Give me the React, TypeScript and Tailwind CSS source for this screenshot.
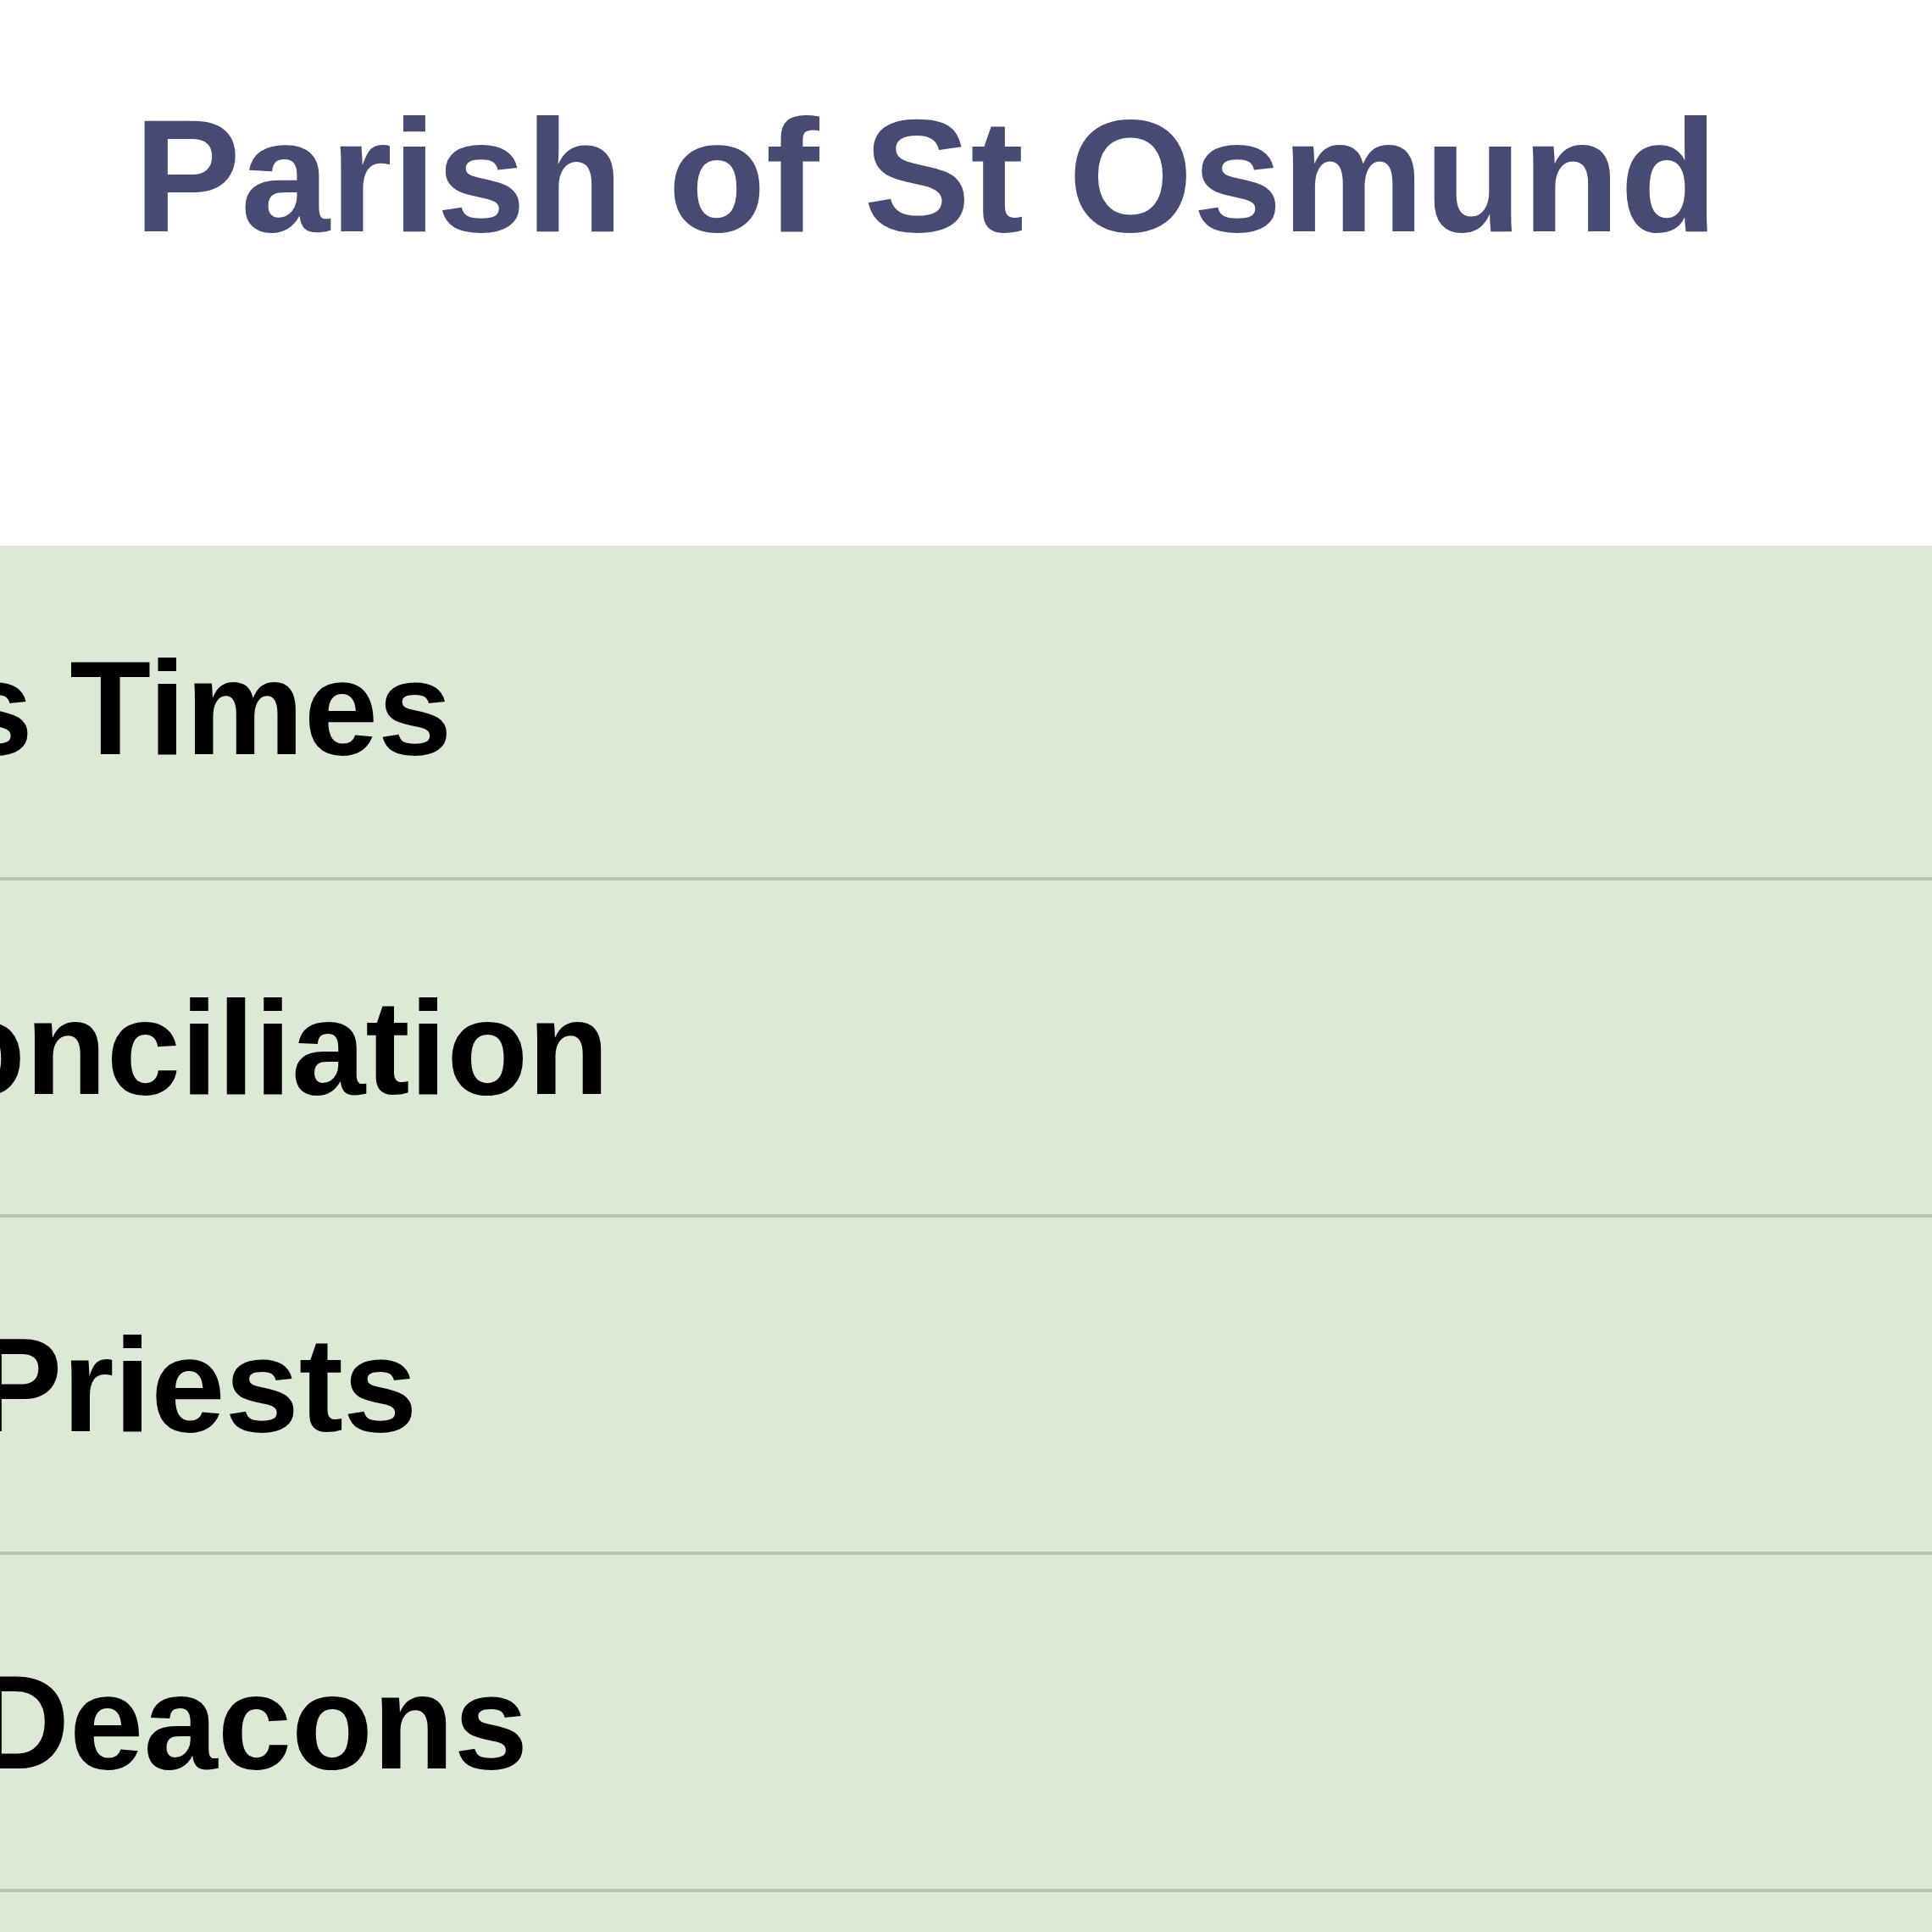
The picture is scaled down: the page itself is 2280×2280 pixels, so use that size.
import React from 'react';

const menuItems = ['Mass Times', 'Reconciliation', 'Our Priests', 'Our Deacons', 'Newsletter'];

const App: React.FC = () => (
  <div className="w-[2280px] h-[2280px] overflow-hidden bg-white font-['Liberation_Sans',Arial,sans-serif]">
    {/* Site title */}
    <header className="h-[644px] pl-[158px] pt-[113px]">
      <h1 className="text-[189px] leading-none font-bold text-[#474a72] whitespace-nowrap">Parish of St Osmund</h1>
    </header>

    {/* Menu, scrolled sideways so the first words are cut */}
    <nav className="bg-[#dce9d5]">
      <ul>
        {menuItems.map((item) => (
          <li
            key={item}
            className="h-[398px] first:h-[395px] first:pb-[8px] flex items-center border-b-4 border-[#b7c5b1]"
          >
            <span className="-ml-[354px] text-[157px] leading-none font-bold text-black whitespace-nowrap">{item}</span>
          </li>
        ))}
      </ul>
    </nav>
  </div>
);

export default App;
